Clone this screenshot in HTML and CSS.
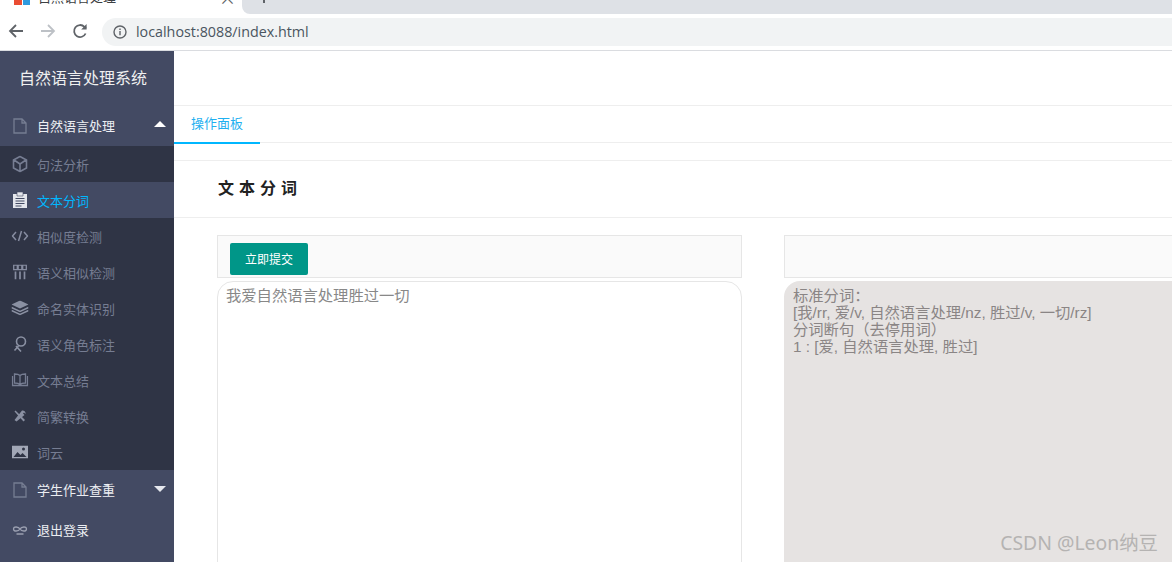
FILE: index.html
```html
<!DOCTYPE html>
<html lang="en">
<head>
  <meta charset="utf-8">
  <title>自然语言处理</title>
  <link rel="stylesheet" href="styles.css">
</head>
<body>
  <!-- browser chrome -->
  <div class="tabstrip">
    <div class="tab">
      <svg class="favicon" width="16" height="14" viewBox="0 0 16 14">
        <rect x="0" y="0" width="8" height="14" fill="#ea4d33"/>
        <rect x="9" y="0" width="7" height="14" fill="#2f9ade"/>
      </svg>
      <span class="tab-title">自然语言处理</span>
      <span class="tab-close">×</span>
    </div>
    <div class="tab-rest"><span class="tab-plus"></span></div>
  </div>
  <div class="toolbar">
    <svg class="nav-icon" width="16" height="16" viewBox="0 0 16 16" fill="none" stroke="#5f6368" stroke-width="1.8">
      <path d="M15 8H2M8 2L2 8l6 6"/>
    </svg>
    <svg class="nav-icon" width="16" height="16" viewBox="0 0 16 16" fill="none" stroke="#bdc1c6" stroke-width="1.8">
      <path d="M1 8h13M8 2l6 6-6 6"/>
    </svg>
    <svg class="nav-icon" width="16" height="16" viewBox="0 0 16 16" fill="none" stroke="#5f6368" stroke-width="1.8">
      <path d="M13.6 10.5A6 6 0 1 1 12.4 3.8L14 5.4"/>
      <path d="M14.6 1v5.4H9.2z" fill="#5f6368" stroke="none"/>
    </svg>
    <div class="omnibox">
      <svg width="14" height="14" viewBox="0 0 14 14" fill="none" stroke="#5f6368" stroke-width="1.4">
        <circle cx="7" cy="7" r="6"/>
        <path d="M7 6v4.2M7 3.4v1.5"/>
      </svg>
      <span class="url">localhost:8088/index.html</span>
    </div>
  </div>

  <div class="app">
    <aside class="sidebar">
      <div class="brand">自然语言处理系统</div>

      <div class="menu-head">
        <svg class="ico" width="14" height="16" viewBox="0 0 14 16" fill="none" stroke="#767d92" stroke-width="1.3">
          <path d="M1 1h8l4 4v10H1zM9 1v4h4"/>
        </svg>
        <span>自然语言处理</span>
        <i class="caret caret-up"></i>
      </div>
      <ul class="submenu">
        <li>
          <svg class="ico" width="16" height="17" viewBox="0 0 16 17" fill="none" stroke="#767d92" stroke-width="1.6">
            <path d="M8 1l6.500 3.500v8L8 16l-6.500-3.500v-8zM2 4.500L8 8.500l6-4M8 8.500V16"/>
          </svg>
          <span>句法分析</span>
        </li>
        <li class="active">
          <svg class="ico" width="14" height="16" viewBox="0 0 14 16">
            <path d="M0 2h14v14H0z" fill="#e4e6ec"/>
            <path d="M4 0h6v4H4z" fill="#e4e6ec" stroke="#434a63" stroke-width=".6"/>
            <path d="M2.500 6.500h9M2.500 9h9M2.500 11.500h9M2.500 14h6" stroke="#434a63" stroke-width="1.100"/>
          </svg>
          <span>文本分词</span>
        </li>
        <li>
          <svg class="ico" width="17" height="12" viewBox="0 0 17 12" fill="none" stroke="#868ca0" stroke-width="1.500">
            <path d="M4.500 2L1 6l3.500 4M12.500 2L16 6l-3.500 4M10 1L7 11"/>
          </svg>
          <span>相似度检测</span>
        </li>
        <li>
          <svg class="ico" width="14" height="15" viewBox="0 0 14 15" fill="none" stroke="#868ca0" stroke-width="1.300">
            <path d="M.7.700h3.600v4.500H.7zM5.200.700h3.600v4.500H5.200zM9.700.700h3.600v4.500H9.700z"/>
            <path d="M2.500 7v8M7 7v8M11.500 7v8" stroke-width="1.700"/>
          </svg>
          <span>语义相似检测</span>
        </li>
        <li>
          <svg class="ico" width="17" height="15" viewBox="0 0 17 15">
            <path d="M8.500 0L17 4l-8.500 4L0 4z" fill="#8a90a2"/>
            <path d="M0 7l8.500 4L17 7M0 10l8.500 4 8.500-4" fill="none" stroke="#8a90a2" stroke-width="1.400"/>
          </svg>
          <span>命名实体识别</span>
        </li>
        <li>
          <svg class="ico" width="15" height="16" viewBox="0 0 15 16" fill="none" stroke="#8a90a2" stroke-width="1.600">
            <circle cx="8.500" cy="5.500" r="4.500"/>
            <path d="M6 10l-4 4.500M3.500 10l5 5.500"/>
          </svg>
          <span>语义角色标注</span>
        </li>
        <li>
          <svg class="ico" width="17" height="14" viewBox="0 0 17 14" fill="none" stroke="#767d92" stroke-width="1.300">
            <path d="M8.500 2.500C7 1 5 1 3 1v9c2 0 4 0 5.500 1.500C10 10 12 10 14 10V1c-2 0-4 0-5.500 1.500zM8.500 2.500v9M1 3v9.500h15V3"/>
          </svg>
          <span>文本总结</span>
        </li>
        <li>
          <svg class="ico" width="13" height="13" viewBox="0 0 13 13">
            <path d="M1 2l1-1 9.500 9.500-1.500 1.500z" fill="#8a90a2"/>
            <path d="M8.500 1a3 3 0 0 1 3.500 3.500L10.500 3 9.500 4 11 5.500 3 12 1 10.500z" fill="#8a90a2"/>
          </svg>
          <span>简繁转换</span>
        </li>
        <li>
          <svg class="ico" width="16" height="13" viewBox="0 0 16 13">
            <path d="M0 0h16v13H0z" fill="#a2a7b6"/>
            <path d="M1.500 11.500l4-5 3 3 2-2 4 4z" fill="#2f3445"/>
            <circle cx="11.500" cy="3.500" r="1.500" fill="#2f3445"/>
          </svg>
          <span>词云</span>
        </li>
      </ul>

      <div class="menu-head">
        <svg class="ico" width="14" height="16" viewBox="0 0 14 16" fill="none" stroke="#767d92" stroke-width="1.300">
          <path d="M1 1h8l4 4v10H1zM9 1v4h4"/>
        </svg>
        <span>学生作业查重</span>
        <i class="caret caret-down"></i>
      </div>
      <div class="menu-head">
        <svg class="ico" width="15" height="10" viewBox="0 0 15 10" fill="none" stroke="#9a9fb0" stroke-width="1.400">
          <path d="M7.500 4C6 1.500 1 1 1 4s5 2.500 6.500 0C9 1.500 14 1 14 4s-5 2.500-6.500 0zM4 9h7"/>
        </svg>
        <span>退出登录</span>
      </div>
    </aside>

    <main class="main">
      <div class="topbar"></div>
      <div class="tabs"><a class="tabs-item">操作面板</a></div>
      <div class="page-title"><h2>文本分词</h2></div>
      <div class="columns">
        <section class="col">
          <div class="form-bar"><button class="btn">立即提交</button></div>
          <div class="input-area">我爱自然语言处理胜过一切</div>
        </section>
        <section class="col">
          <div class="form-bar"></div>
          <div class="result-area">标准分词：<br>[我/rr, 爱/v, 自然语言处理/nz, 胜过/v, 一切/rz]<br>分词断句（去停用词）<br>1 : [爱, 自然语言处理, 胜过]</div>
        </section>
      </div>
    </main>
  </div>

  <div class="watermark">CSDN @Leon纳豆</div>
</body>
</html>
```

FILE: styles.css
```css
* {
  box-sizing: border-box;
}
html, body {
  height: 100%;
}
body {
  margin: 0;
  overflow: hidden;
  position: relative;
  background: #fff;
  font-family: "Liberation Sans", "Noto Sans CJK SC", sans-serif;
}

/* browser chrome */
.tabstrip {
  display: flex;
  height: 14px;
  overflow: hidden;
}
.tab {
  width: 242px;
  display: flex;
  align-items: flex-end;
  position: relative;
  padding-left: 14px;
  font-size: 13px;
  color: #3c4043;
  font-family: "Noto Sans CJK SC", sans-serif;
}
.favicon {
  flex: none;
  margin-bottom: 9px;
}
.tab-title {
  margin-left: 8px;
  line-height: 18px;
  margin-bottom: 8px;
}
.tab-close {
  position: absolute;
  left: 219px;
  top: -15px;
  font-size: 17px;
  color: #5f6368;
}
.tab-rest {
  flex: 1;
  background: #dee1e6;
  border-bottom-left-radius: 8px;
  padding-left: 21px;
}
.tab-plus {
  display: block;
  width: 2px;
  height: 3px;
  background: #5f6368;
}
.toolbar {
  height: 37px;
  display: flex;
  align-items: center;
  padding-left: 8px;
  border-bottom: 1px solid #dadce0;
}
.nav-icon {
  margin-right: 16px;
  margin-top: -2px;
  flex: none;
}
.omnibox {
  margin-left: -2px;
  flex: 1;
  height: 28px;
  margin-right: -14px;
  border-radius: 14px;
  background: #f1f3f4;
  display: flex;
  align-items: center;
  padding-left: 11px;
  gap: 9px;
}
.url {
  font-family: "Open Sans", sans-serif;
  font-size: 14.3px;
  color: #4a5560;
  margin-top: -2px;
}

/* sidebar */
.app {
  display: flex;
  height: 511px;
}
.sidebar {
  width: 174px;
  flex: none;
  background: #434a63;
  color: #d8dbe2;
  font-family: "Noto Sans CJK SC", sans-serif;
}
.brand {
  height: 55px;
  line-height: 53px;
  padding-left: 19px;
  font-size: 16px;
  color: #f0f0f0;
}
.menu-head {
  height: 40px;
  display: flex;
  align-items: center;
  position: relative;
  padding-bottom: 2px;
  font-size: 13px;
  color: #eceef2;
}
.menu-head span,
.submenu span {
  position: absolute;
  left: 37px;
}
.ico {
  position: absolute;
  left: 20px;
  top: 50%;
  transform: translate(-50%, -50%);
}
.caret {
  position: absolute;
  left: 154px;
  width: 0;
  height: 0;
  border-left: 6px solid transparent;
  border-right: 6px solid transparent;
}
.caret-up {
  top: 15px;
  border-bottom: 6px solid #fff;
}
.caret-down {
  top: 16px;
  border-top: 6px solid #e6e8ee;
}
.submenu {
  list-style: none;
  margin: 0;
  padding: 0;
  background: #2f3445;
}
.submenu li {
  height: 36px;
  position: relative;
  display: flex;
  align-items: center;
  font-size: 13px;
  color: #767d92;
}
.submenu li.active {
  background: #434a63;
  color: #00b7ff;
}

/* main */
.main {
  flex: 1;
  min-width: 0;
  overflow: hidden;
}
.topbar {
  height: 55px;
  border-bottom: 1px solid #eee;
}
.tabs {
  height: 37px;
  border-bottom: 1px solid #eee;
  display: flex;
}
.tabs-item {
  width: 86px;
  height: 38px;
  padding-left: 17px;
  line-height: 33px;
  font-size: 13px;
  color: #1fb0f0;
  border-bottom: 2px solid #00b7ff;
  font-family: "Noto Sans CJK SC", sans-serif;
}
.page-title {
  margin-top: 17px;
  height: 58px;
  border-top: 1px solid #eee;
  border-bottom: 1px solid #eee;
  padding: 0 0 5px 44px;
  display: flex;
  align-items: center;
}
.page-title h2 {
  margin: 0;
  font-size: 16px;
  letter-spacing: 5px;
  color: #222;
  font-family: "Noto Sans CJK SC", sans-serif;
}
.columns {
  display: grid;
  grid-template-columns: 525px 525px;
  column-gap: 42px;
  margin-top: 17px;
  padding-left: 43px;
}
.form-bar {
  height: 43px;
  background: #fafafa;
  border: 1px solid #e6e6e6;
  padding: 7px 12px;
}
.btn {
  display: block;
  width: 78px;
  height: 32px;
  padding: 0 0 2px;
  border: none;
  border-radius: 2px;
  background: #009688;
  color: #fff;
  font-size: 12px;
  font-family: "Noto Sans CJK SC", sans-serif;
}
.input-area,
.result-area {
  margin-top: 3px;
  height: 320px;
  border-radius: 16px;
  font-size: 15.3px;
  line-height: 17px;
  color: #888;
}
.input-area {
  padding: 5px 8px;
  border: 1px solid #e6e6e6;
  background: #fff;
}
.result-area {
  padding: 6px 9px;
  background: #e6e3e2;
  color: #8a8585;
}

.watermark {
  position: absolute;
  right: 14px;
  bottom: 6px;
  font-family: "Noto Sans", "Noto Sans CJK SC", sans-serif;
  font-size: 19.4px;
  color: #b5b3b2;
}
```
